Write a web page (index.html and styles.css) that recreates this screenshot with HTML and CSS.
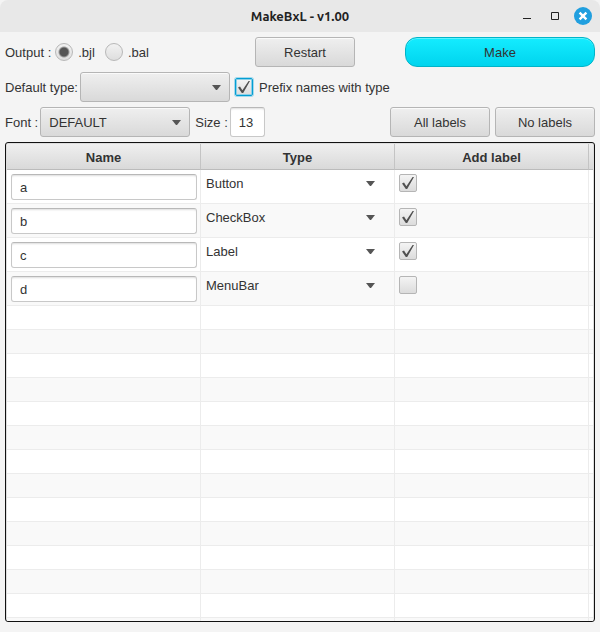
FILE: index.html
```
<!DOCTYPE html>
<html lang="en">
	<head>
		<meta charset="utf-8">
		<title>MakeBxL - v1.00</title>
		<link rel="stylesheet" href="styles.css">
	</head>
	<body>
		<header class="titlebar">
			<h1>MakeBxL - v1.00</h1>
			<div class="window-buttons">
				<button class="win" aria-label="Minimize">
					<svg width="18" height="18"><path d="M5 11h8v1H5z" fill="#222"/></svg>
				</button>
				<button class="win" aria-label="Maximize">
					<svg width="18" height="18"><path d="M5.5 5.5h7v7h-7z" fill="none" stroke="#222"/></svg>
				</button>
				<button class="win" aria-label="Close">
					<svg width="18" height="18"><circle cx="9" cy="9" r="9" fill="#209fdf"/><path d="M5.6 5.6l6.8 6.8M12.4 5.6l-6.8 6.8" stroke="#fff" stroke-width="2.4"/></svg>
				</button>
			</div>
		</header>
		<main>
			<div class="bar">
				<div class="group output">
					<span>Output :</span>
					<label class="radio"><input type="radio" name="output" checked>.bjl</label>
					<label class="radio"><input type="radio" name="output">.bal</label>
				</div>
				<button class="btn">Restart</button>
				<button class="btn make">Make</button>
			</div>
			<div class="bar">
				<div class="group">
					<label for="default-type">Default type:</label>
					<select class="combo" id="default-type">
						<option></option>
						<option>Button</option>
						<option>CheckBox</option>
						<option>Label</option>
						<option>MenuBar</option>
					</select>
				</div>
				<label class="check"><input type="checkbox" class="focused" checked>Prefix names with type</label>
			</div>
			<div class="bar">
				<div class="group">
					<label for="font">Font :</label>
					<select class="combo" id="font"><option>DEFAULT</option></select>
				</div>
				<div class="group">
					<label for="size">Size :</label>
					<input type="text" class="size" id="size" value="13">
				</div>
				<div class="group right">
					<button class="btn">All labels</button>
					<button class="btn">No labels</button>
				</div>
			</div>
			<div class="table-box">
				<table>
					<colgroup><col><col><col><col class="rest"></colgroup>
					<thead>
						<tr><th>Name</th><th>Type</th><th>Add label</th><th></th></tr>
					</thead>
					<tbody>
						<tr class="item">
							<td><input type="text" aria-label="Name" value="a"></td>
							<td><select aria-label="Type"><option>Button</option></select></td>
							<td><input type="checkbox" aria-label="Add label" checked></td>
							<td></td>
						</tr>
						<tr class="item">
							<td><input type="text" aria-label="Name" value="b"></td>
							<td><select aria-label="Type"><option>CheckBox</option></select></td>
							<td><input type="checkbox" aria-label="Add label" checked></td>
							<td></td>
						</tr>
						<tr class="item">
							<td><input type="text" aria-label="Name" value="c"></td>
							<td><select aria-label="Type"><option>Label</option></select></td>
							<td><input type="checkbox" aria-label="Add label" checked></td>
							<td></td>
						</tr>
						<tr class="item">
							<td><input type="text" aria-label="Name" value="d"></td>
							<td><select aria-label="Type"><option>MenuBar</option></select></td>
							<td><input type="checkbox" aria-label="Add label"></td>
							<td></td>
						</tr>
						<tr><td></td><td></td><td></td><td></td></tr>
						<tr><td></td><td></td><td></td><td></td></tr>
						<tr><td></td><td></td><td></td><td></td></tr>
						<tr><td></td><td></td><td></td><td></td></tr>
						<tr><td></td><td></td><td></td><td></td></tr>
						<tr><td></td><td></td><td></td><td></td></tr>
						<tr><td></td><td></td><td></td><td></td></tr>
						<tr><td></td><td></td><td></td><td></td></tr>
						<tr><td></td><td></td><td></td><td></td></tr>
						<tr><td></td><td></td><td></td><td></td></tr>
						<tr><td></td><td></td><td></td><td></td></tr>
						<tr><td></td><td></td><td></td><td></td></tr>
						<tr><td></td><td></td><td></td><td></td></tr>
						<tr><td></td><td></td><td></td><td></td></tr>
					</tbody>
				</table>
			</div>
		</main>
	</body>
</html>
```

FILE: styles.css
```
* {
	box-sizing: border-box;
}
body {
	margin: 0;
	height: 100vh;
	display: flex;
	flex-direction: column;
	background-color: #f4f4f4;
	color: #333;
	font-family: "Liberation Sans", Arial, sans-serif;
	font-size: 13px;
}
button, input, select {
	margin: 0;
	font: inherit;
	color: inherit;
}

/* title bar */
.titlebar {
	display: grid;
	grid-template-columns: 1fr auto 1fr;
	align-items: center;
	height: 32px;
	padding: 0 8px;
	background-color: #e8e8e8;
	border-radius: 8px 8px 0 0;
}
.titlebar h1 {
	grid-column: 2;
	margin: 0;
	font-family: Ubuntu, "Noto Sans", sans-serif;
	font-size: 13px;
	font-weight: bold;
	color: #222;
}
.window-buttons {
	display: flex;
	justify-content: flex-end;
	gap: 10px;
}
.win {
	width: 18px;
	height: 18px;
	padding: 0;
	border: none;
	background: none;
}
.win svg {
	display: block;
}

/* form rows */
main {
	flex: 1;
	min-height: 0;
	display: flex;
	flex-direction: column;
	gap: 5px;
	padding: 5px 5px 10px;
}
.bar {
	display: flex;
	align-items: center;
	gap: 5px;
	height: 30px;
}
.group {
	display: flex;
	align-items: center;
	gap: 2px;
}
.output {
	width: 245px;
	gap: 4px;
}
.right {
	margin-left: auto;
	gap: 5px;
}
.radio, .check {
	display: flex;
	align-items: center;
	gap: 5px;
}
.check {
	gap: 6px;
}
.radio + .radio {
	margin-left: 6px;
}
.btn {
	width: 100px;
	height: 30px;
	border: 1px solid #b5b5b5;
	border-radius: 3px;
	background: linear-gradient(#efefef, #d9d9d9);
	box-shadow: inset 0 1px #fafafa;
}
.make {
	width: 190px;
	margin-left: auto;
	border-color: #00b4c8;
	border-radius: 12px;
	background: linear-gradient(#14ecff, #00d4ee);
	box-shadow: inset 0 1px #5cf2ff;
}
select {
	appearance: none;
	border: 1px solid #b5b5b5;
	border-radius: 3px;
	background: url("data:image/svg+xml,%3Csvg xmlns='http://www.w3.org/2000/svg' width='9' height='5'%3E%3Cpath d='M0 0h9L5 5H4z' fill='%23555'/%3E%3C/svg%3E") no-repeat right 8px center, linear-gradient(#efefef, #d9d9d9);
}
.combo {
	width: 150px;
	height: 30px;
	padding: 0 8px;
	box-shadow: inset 0 1px #fafafa;
}
input[type=text] {
	border: 1px solid #c8c8c8;
	border-top-color: #b8b8b8;
	border-radius: 3px;
	background-color: #fff;
	box-shadow: inset 0 2px 2px -1px #ddd;
}
.size {
	width: 35px;
	height: 30px;
	padding: 0 8px;
}
input[type=radio] {
	appearance: none;
	width: 18px;
	height: 18px;
	border: 1px solid #b8b8b8;
	border-radius: 50%;
	background: linear-gradient(#f2f2f2, #dedede);
}
input[type=radio]:checked {
	background: radial-gradient(circle, #555 4px, transparent 6px), linear-gradient(#f2f2f2, #dedede);
}
input[type=checkbox] {
	appearance: none;
	display: block;
	width: 18px;
	height: 18px;
	border: 1px solid #b5b5b5;
	border-radius: 2px;
	background: linear-gradient(#f4f4f4, #dcdcdc);
}
input[type=checkbox]:checked {
	background: url("data:image/svg+xml,%3Csvg xmlns='http://www.w3.org/2000/svg' width='16' height='16'%3E%3Cpath d='M2 8.4L4 7.4 6.4 11.2 12.6 2 14 2 7.2 14H5.8z' fill='%23505050'/%3E%3C/svg%3E") center no-repeat, linear-gradient(#f4f4f4, #dcdcdc);
}
input[type=checkbox].focused {
	border-color: #039ed3;
	box-shadow: 0 0 0 1px #a5d9ec, inset 0 0 0 1px #8cd0e8;
}

/* table */
.table-box {
	flex: 1;
	min-height: 0;
	overflow: hidden;
	border: 1px solid #111;
	border-radius: 3px;
	padding: 1px;
	background-color: #fff;
	box-shadow: inset 0 0 0 1px #ddd;
}
table {
	width: 100%;
	table-layout: fixed;
	border-collapse: separate;
	border-spacing: 0;
}
.rest {
	width: 4px;
}
th {
	height: 26px;
	padding: 2px 0 0;
	border-right: 1px solid #c4c4c4;
	border-bottom: 1px solid #bbb;
	background: linear-gradient(#efefef, #d9d9d9);
}
td {
	height: 24px;
	padding: 0;
	border-right: 1px solid #ececec;
	border-bottom: 1px solid #ececec;
	vertical-align: top;
}
th:last-child, td:last-child {
	border-right: none;
}
tbody tr:nth-child(even) {
	background-color: #f9f9f9;
}
.item td {
	height: 34px;
	padding: 4px 3px 0 4px;
}
td input[type=text] {
	display: block;
	width: 100%;
	height: 26px;
	padding: 0 8px;
}
td select {
	display: block;
	width: 100%;
	height: 18px;
	padding: 0 1px;
	border: none;
	background-color: transparent;
	background-image: url("data:image/svg+xml,%3Csvg xmlns='http://www.w3.org/2000/svg' width='9' height='5'%3E%3Cpath d='M0 0h9L5 5H4z' fill='%23555'/%3E%3C/svg%3E");
	background-position: right 16px center;
}
```
